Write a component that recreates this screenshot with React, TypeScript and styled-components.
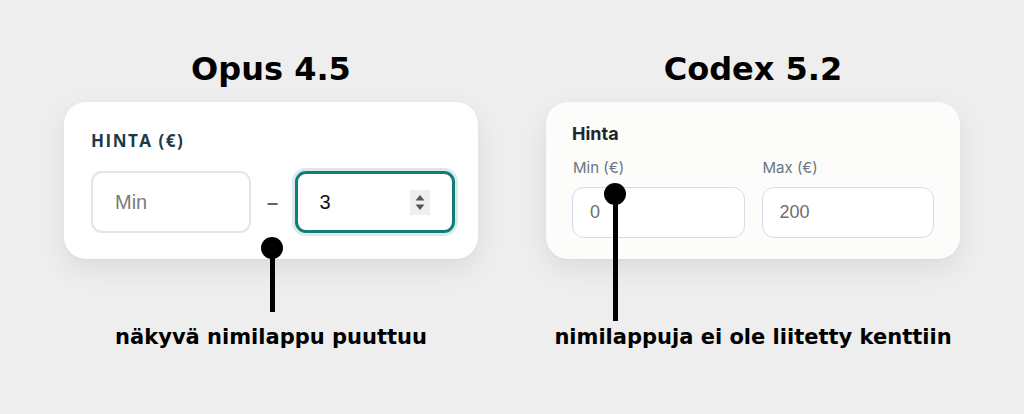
import React from 'react';
import styled, { createGlobalStyle } from 'styled-components';

const Global = createGlobalStyle`
  html, body { margin: 0; padding: 0; background: #eeeeee; }
  body { width: 1024px; height: 414px; overflow: hidden; font-family: "DejaVu Sans", sans-serif; }
  * { box-sizing: border-box; }
`;

const Page = styled.main`
  display: flex;
  gap: 68px;
  padding: 50px 64px 0;
`;

const Column = styled.section`
  position: relative;
  width: 414px;
  display: flex;
  flex-direction: column;
`;

const Title = styled.h2`
  margin: 0;
  font: 700 32px/38px "DejaVu Sans", sans-serif;
  color: #000;
  text-align: center;
`;

const Card = styled.div<{ $tint: string }>`
  margin-top: 14px;
  height: 157px;
  border-radius: 22px;
  background: ${(p) => p.$tint};
  box-shadow: 0 10px 28px rgba(0, 0, 0, 0.08), 0 1px 3px rgba(0, 0, 0, 0.03);
`;

const OpusCard = styled(Card)`
  padding: 28px 23px 26px 27px;
  display: flex;
  flex-direction: column;
  gap: 19px;
`;

const CapsLabel = styled.div`
  font: 700 17px/22px "Open Sans", sans-serif;
  letter-spacing: 1.5px;
  color: #1c3a45;
`;

const RangeRow = styled.div`
  display: flex;
  align-items: center;
  height: 62px;
`;

const Field = styled.div<{ $focused?: boolean }>`
  flex: 1 1 0;
  min-width: 0;
  height: 62px;
  display: flex;
  align-items: center;
  padding: 0 ${(p) => (p.$focused ? 22 : 23)}px 0 22px;
  border-radius: 11px;
  background: #fff;
  border: ${(p) => (p.$focused ? '3px solid #137b79' : '2px solid #dde6ed')};
  box-shadow: ${(p) => (p.$focused ? '0 0 0 3px rgba(19, 123, 121, 0.16)' : 'none')};
`;

const PlainInput = styled.input<{ $size: number }>`
  flex: 1 1 0;
  width: 0;
  min-width: 0;
  border: none;
  outline: none;
  background: transparent;
  padding: 0;
  font: 400 ${(p) => p.$size}px "Liberation Sans", Arial, sans-serif;
  color: #111;
  &::placeholder { color: #7a7a7a; }
`;

const Dash = styled.span`
  flex: none;
  width: 44px;
  text-align: center;
  font: 700 20px "Liberation Sans", Arial, sans-serif;
  color: #56666f;
`;

const CodexCard = styled(Card)`
  padding: 20px 26px 21px 26px;
  display: flex;
  flex-direction: column;
`;

const GroupTitle = styled.div`
  font: 700 18px/24px Inter, sans-serif;
  color: #1f2630;
  margin-bottom: 12px;
`;

const Grid = styled.div`
  display: grid;
  grid-template-columns: 1fr 1fr;
  column-gap: 17px;
`;

const FieldCol = styled.div`
  display: flex;
  flex-direction: column;
  gap: 9px;
  min-width: 0;
`;

const SmallLabel = styled.label`
  font: 400 15px/20px Inter, sans-serif;
  color: #6a7584;
  padding-left: 1px;
`;

const BoxInput = styled.input`
  height: 51px;
  width: 100%;
  border: 1px solid #d4dbe7;
  border-radius: 12px;
  background: #fff;
  padding: 0 17px;
  outline: none;
  font: 400 18px "Liberation Sans", Arial, sans-serif;
  color: #6e6e6e;
`;

const Caption = styled.p`
  margin: 65px 0 0;
  font: 700 21px/26px "DejaVu Sans", sans-serif;
  color: #000;
  text-align: center;
  white-space: nowrap;
`;

const Pointer = styled.div<{ $x: number; $y: number; $len: number }>`
  position: absolute;
  left: ${(p) => p.$x - 11}px;
  top: ${(p) => p.$y - 11}px;
  width: 22px;
  height: ${(p) => p.$len + 11}px;
  &::before {
    content: '';
    position: absolute;
    left: 0;
    top: 0;
    width: 22px;
    height: 22px;
    border-radius: 50%;
    background: #000;
  }
  &::after {
    content: '';
    position: absolute;
    left: 8.5px;
    top: 11px;
    width: 5px;
    height: ${(p) => p.$len}px;
    background: #000;
  }
`;

const Spinner = () => (
  <svg width="20" height="25" viewBox="0 0 20 25" aria-hidden="true">
    <rect width="20" height="25" fill="#efefef" />
    <path d="M10 5 L14.5 10.5 L5.5 10.5 Z" fill="#555" />
    <path d="M10 20 L14.5 14.5 L5.5 14.5 Z" fill="#555" />
  </svg>
);

export default function App() {
  return (
    <>
      <Global />
      <Page>
        <Column>
          <Title>Opus 4.5</Title>
          <OpusCard $tint="#ffffff">
            <CapsLabel>HINTA (€)</CapsLabel>
            <RangeRow>
              <Field>
                <PlainInput $size={20} placeholder="Min" readOnly />
              </Field>
              <Dash>–</Dash>
              <Field $focused>
                <PlainInput $size={20} value="3" readOnly />
                <Spinner />
              </Field>
            </RangeRow>
          </OpusCard>
          <Caption>näkyvä nimilappu puuttuu</Caption>
          <Pointer $x={208} $y={198} $len={64} />
        </Column>
        <Column>
          <Title>Codex 5.2</Title>
          <CodexCard $tint="#fcfcfa">
            <GroupTitle>Hinta</GroupTitle>
            <Grid>
              <FieldCol>
                <SmallLabel>Min (€)</SmallLabel>
                <BoxInput value="0" readOnly />
              </FieldCol>
              <FieldCol>
                <SmallLabel>Max (€)</SmallLabel>
                <BoxInput value="200" readOnly />
              </FieldCol>
            </Grid>
          </CodexCard>
          <Caption>nimilappuja ei ole liitetty kenttiin</Caption>
          <Pointer $x={69} $y={144} $len={127} />
        </Column>
      </Page>
    </>
  );
}
